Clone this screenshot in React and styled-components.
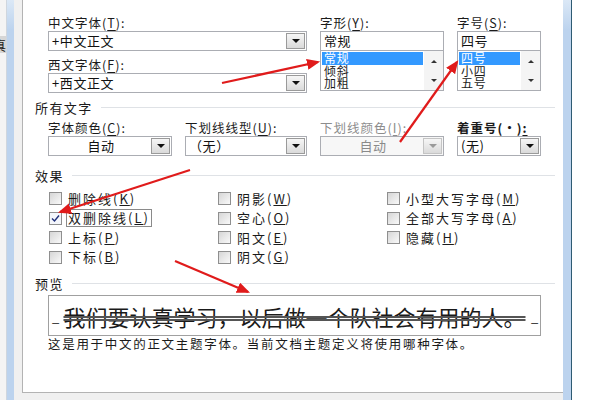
import React from 'react';
import styled, { createGlobalStyle, css } from 'styled-components';

const GlobalStyle = createGlobalStyle`
  html, body {
    margin: 0;
    padding: 0;
    background: #fff;
  }
  body {
    font-family: "Noto Sans CJK SC", "Liberation Sans", sans-serif;
    color: #1b1b1b;
  }
`;

const Screen = styled.div`
  position: relative;
  width: 600px;
  height: 400px;
  overflow: hidden;
  display: flex;
`;

const BackEdge = styled.div`
  width: 6px;
  background: #f4f4f4;
  border-right: 1px solid #cfd6de;
`;

const BackTab = styled.div`
  margin-top: 36px;
  height: 17px;
  background: #d6d6d6;
  overflow: hidden;
  font-size: 13px;
  line-height: 17px;
  span {
    display: block;
    margin-left: -7px;
  }
`;

const FrameBar = styled.div`
  width: ${p => p.$w}px;
  background: linear-gradient(#dbe8f6 0, #bcd3ee 30px, #bcd3ee 100%);
  border-right: ${p => (p.$dark ? '1px solid #2e5b73' : 'none')};
`;

const Dialog = styled.div`
  width: 549px;
  background: #f0f0f0;
  padding: 0 10px 7px 8px;
  box-sizing: border-box;
  display: flex;
`;

const Panel = styled.div`
  flex: 1;
  background: #fff;
  border: 1px solid #b3b3b3;
  border-top: none;
  padding: 14px 11px 0 12px;
  font-size: 12.5px;
  letter-spacing: 1px;
`;

const Indent = styled.div`
  margin-left: 13px;
`;

const TopGrid = styled(Indent)`
  display: grid;
  grid-template-columns: 259px 124px 84px;
  column-gap: 13px;
`;

const Column = styled.div`
  display: flex;
  flex-direction: column;
`;

const Label = styled.div`
  height: 17px;
  line-height: 17px;
  white-space: nowrap;
  margin-top: ${p => p.$gap || 0}px;
  color: ${p => (p.$disabled ? '#8d8d8d' : '#1b1b1b')};
  font-weight: ${p => (p.$bold ? 700 : 400)};
  u { text-decoration-thickness: 1px; text-underline-offset: 2px; }
`;

const Box = styled.div`
  box-sizing: border-box;
  height: 20px;
  border: 1px solid #abadb3;
  background: ${p => (p.$disabled ? '#f7f7f7' : '#fff')};
  display: flex;
  align-items: stretch;
  font-size: 13px;
  letter-spacing: 0.6px;
`;

const BoxText = styled.div`
  flex: 1;
  line-height: 18px;
  padding-left: 3px;
  white-space: nowrap;
  color: ${p => (p.$disabled ? '#8a8a8a' : '#111')};
  text-align: ${p => (p.$center ? 'center' : 'left')};
`;

const DropButton = styled.div`
  width: 17px;
  margin: 1px;
  border: 1px solid ${p => (p.$disabled ? '#c4c4c4' : '#9a9a9a')};
  background: linear-gradient(#f6f6f6, #dadada);
  display: flex;
  align-items: center;
  justify-content: center;
  &::after {
    content: '';
    border-left: 4px solid transparent;
    border-right: 4px solid transparent;
    border-top: 4px solid ${p => (p.$disabled ? '#9a9a9a' : '#111')};
  }
`;

const List = styled.div`
  box-sizing: border-box;
  height: 40px;
  border: 1px solid #abadb3;
  border-top: none;
  display: flex;
  font-size: 12px;
  letter-spacing: 0.8px;
`;

const Items = styled.div`
  flex: 1;
  padding: 1px 1px 0 1px;
`;

const Item = styled.div`
  height: 12.6px;
  line-height: 12.6px;
  padding-left: 2px;
  white-space: nowrap;
  ${p => p.$selected && css`
    background: #3399ff;
    color: #fff;
  `}
`;

const ScrollBar = styled.div`
  width: 19px;
  background: #f4f4f4;
  display: flex;
  flex-direction: column;
  justify-content: space-between;
  align-items: center;
  padding: 9px 0 8px;
  box-sizing: border-box;
`;

const ScrollArrow = styled.div`
  border-left: 3px solid transparent;
  border-right: 3px solid transparent;
  ${p => (p.$up
    ? 'border-bottom: 3px solid #333;'
    : 'border-top: 3px solid #333;')}
`;

const SectionHead = styled.div`
  display: flex;
  align-items: center;
  gap: 8px;
  height: 16px;
  margin-top: ${p => p.$gap}px;
  font-size: 13px;
  letter-spacing: 1.4px;
  &::after {
    content: '';
    flex: 1;
    height: 1px;
    background: #dfe2e6;
  }
`;

const FourGrid = styled(Indent)`
  display: grid;
  grid-template-columns: 124px 122px 124px 84px;
  column-gap: 13px;
  margin-top: 4px;
`;

const EffectsGrid = styled(Indent)`
  display: grid;
  grid-template-columns: repeat(3, 169px);
  grid-auto-rows: 19.5px;
  margin-top: 6px;
`;

const Check = styled.div`
  display: flex;
  align-items: center;
  gap: 4px;
  font-size: 13px;
  letter-spacing: 2px;
  white-space: nowrap;
`;

const CheckBox = styled.div`
  box-sizing: border-box;
  width: 13px;
  height: 13px;
  margin-left: 1px;
  border: 1px solid #8f8f8f;
  background: linear-gradient(135deg, #d6d6d6, #f9f9f9);
  display: flex;
  align-items: center;
  justify-content: center;
  ${p => p.$checked && css`
    background: #f4f6fb;
  `}
`;

const CheckText = styled.span`
  padding: 0 1px;
  line-height: 16px;
  border: 1px solid ${p => (p.$focus ? '#8a8a8a' : 'transparent')};
`;

const Preview = styled(Indent)`
  box-sizing: border-box;
  width: 493px;
  height: 41px;
  margin-top: 4px;
  border: 1px solid #a0a0a0;
  display: flex;
  align-items: center;
  padding: 0 3px;
  font-size: 13px;
`;

const Cursor = styled.span`
  width: 6px;
  transform: translateY(1px);
`;

const PreviewText = styled.div`
  flex: 1;
  text-align: center;
  font-size: 22px;
  letter-spacing: 0;
  color: #1a1a1a;
  white-space: nowrap;
  span {
    text-decoration-line: line-through;
    text-decoration-style: double;
    text-decoration-color: #555;
    text-decoration-thickness: 1.5px;
  }
`;

const Note = styled(Indent)`
  margin-top: 0;
  font-size: 12.5px;
  letter-spacing: 1.7px;
  line-height: 16px;
  white-space: nowrap;
`;

const RightGap = styled.div`
  width: 28px;
  background: #fff;
`;

const Marks = styled.svg`
  position: absolute;
  inset: 0;
  pointer-events: none;
`;

const Combo = ({ text, center, disabled }) => (
  <Box $disabled={disabled}>
    <BoxText $center={center} $disabled={disabled}>{text}</BoxText>
    <DropButton $disabled={disabled} />
  </Box>
);

const PickList = ({ value, items }) => (
  <>
    <Box><BoxText>{value}</BoxText></Box>
    <List>
      <Items>
        {items.map((it, i) => <Item key={it} $selected={i === 0}>{it}</Item>)}
      </Items>
      <ScrollBar>
        <ScrollArrow $up />
        <ScrollArrow />
      </ScrollBar>
    </List>
  </>
);

const effects = [
  ['删除线', 'K'], ['阴影', 'W'], ['小型大写字母', 'M'],
  ['双删除线', 'L', true], ['空心', 'O'], ['全部大写字母', 'A'],
  ['上标', 'P'], ['阳文', 'E'], ['隐藏', 'H'],
  ['下标', 'B'], ['阴文', 'G'],
];

const arrows = [
  [222, 83, 318, 62],
  [400, 142, 457, 62],
  [190, 170, 60, 212],
  [175, 261, 248, 292],
];

const Key = ({ k }) => <>(<u>{k}</u>)</>;

export default function App() {
  return (
    <Screen>
      <GlobalStyle />
      <BackEdge>
        <BackTab><span>真</span></BackTab>
      </BackEdge>
      <FrameBar $w={7} />
      <Dialog>
        <Panel>
          <TopGrid>
            <Column>
              <Label>中文字体<Key k="T" />:</Label>
              <Combo text="+中文正文" />
              <Label $gap={5}>西文字体<Key k="F" />:</Label>
              <Combo text="+西文正文" />
            </Column>
            <Column>
              <Label>字形<Key k="Y" />:</Label>
              <PickList value="常规" items={['常规', '倾斜', '加粗']} />
            </Column>
            <Column>
              <Label>字号<Key k="S" />:</Label>
              <PickList value="四号" items={['四号', '小四', '五号']} />
            </Column>
          </TopGrid>

          <SectionHead $gap={6}>所有文字</SectionHead>
          <FourGrid>
            <Column>
              <Label>字体颜色<Key k="C" />:</Label>
              <Combo text="自动" center />
            </Column>
            <Column>
              <Label>下划线线型<Key k="U" />:</Label>
              <Combo text="（无）" />
            </Column>
            <Column>
              <Label $disabled>下划线颜色<Key k="I" />:</Label>
              <Combo text="自动" center disabled />
            </Column>
            <Column>
              <Label $bold>着重号(·)<u>:</u></Label>
              <Combo text="(无)" />
            </Column>
          </FourGrid>

          <SectionHead $gap={11}>效果</SectionHead>
          <EffectsGrid>
            {effects.map(([name, k, on]) => (
              <Check key={name}>
                <CheckBox $checked={on}>
                  {on && (
                    <svg width="9" height="9" viewBox="0 0 9 9">
                      <path d="M1 4.5 L3.5 7 L8 1.5" fill="none" stroke="#1f2f7a" strokeWidth="1.4" />
                    </svg>
                  )}
                </CheckBox>
                <CheckText $focus={on}>{name}<Key k={k} /></CheckText>
              </Check>
            ))}
          </EffectsGrid>

          <SectionHead $gap={8}>预览</SectionHead>
          <Preview>
            <Cursor>_</Cursor>
            <PreviewText><span>我们要认真学习，以后做一个队社会有用的人。</span></PreviewText>
            <Cursor>_</Cursor>
          </Preview>
          <Note>这是用于中文的正文主题字体。当前文档主题定义将使用哪种字体。</Note>
        </Panel>
      </Dialog>
      <FrameBar $w={8} $dark />
      <RightGap />

      <Marks width="600" height="400" viewBox="0 0 600 400">
        <defs>
          <marker id="head" markerWidth="6" markerHeight="5" refX="5" refY="2.5" orient="auto" markerUnits="strokeWidth">
            <path d="M0 0 L6 2.5 L0 5 Z" fill="#e01b1b" />
          </marker>
        </defs>
        {arrows.map(([x1, y1, x2, y2]) => (
          <line key={x1} x1={x1} y1={y1} x2={x2} y2={y2} stroke="#e01b1b" strokeWidth="2.2" markerEnd="url(#head)" />
        ))}
      </Marks>
    </Screen>
  );
}
